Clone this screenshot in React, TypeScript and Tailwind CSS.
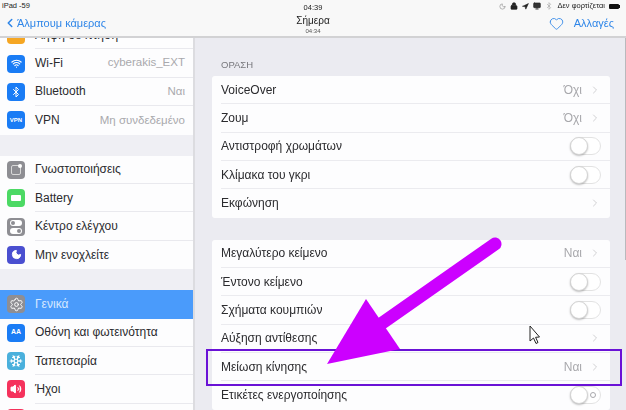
import {ReactNode} from "react";
import {ChevronLeft, ChevronRight, Heart, Bluetooth, Wifi, Moon, Lock, Navigation, Monitor, Snowflake, Settings, Volume2} from "lucide-react";

const font = "[font-family:'Liberation_Sans','Noto_Sans',sans-serif]";

const Toggle = ({ring}: {ring?: boolean}) => (
    <div className="relative flex h-[18px] w-[31px] items-center justify-end rounded-full border border-[#e2e2e2] bg-white pr-[4px]">
        <div className="absolute -left-px -top-px h-[18px] w-[18px] rounded-full border border-[#d4d4d4] bg-white shadow-[0_1px_2px_rgba(0,0,0,0.25)]" />
        {ring && <div className="h-[6px] w-[6px] rounded-full border border-[#a8a8ac]" />}
    </div>
);

const Value = ({text}: {text?: string}) => (
    <div className="flex items-center gap-[7px]">
        {text && <span className="text-[12px] text-[#a8a8ac]">{text}</span>}
        <ChevronRight size={12} strokeWidth={1.6} className="text-[#c4c4c8]" />
    </div>
);

const SideIcon = ({bg, children}: {bg: string; children?: ReactNode}) => (
    <div className={`flex h-[18px] w-[18px] shrink-0 items-center justify-center overflow-hidden rounded-[4px] text-white ${bg}`}>
        {children}
    </div>
);

const SideRow = ({icon, label, value, last, active}: {icon: ReactNode; label: string; value?: string; last?: boolean; active?: boolean}) => (
    <div className={`flex h-[28.4px] items-center pl-[7px] ${active ? "bg-[#4a9bfb]" : "bg-[#fdfdfe]"}`}>
        {icon}
        <div className={`ml-[10px] flex h-full min-w-0 flex-1 items-center justify-between pr-[8px] ${last || active ? "" : "border-b border-[#e9e9ee]"}`}>
            <span className={`text-[12px] ${active ? "text-[#d5e8ff]" : "text-[#2b2b2e]"}`}>{label}</span>
            {value && <span className="text-[11.5px] text-[#a9a9ad]">{value}</span>}
        </div>
    </div>
);

const SetRow = ({label, right, last}: {label: string; right: ReactNode; last?: boolean}) => (
    <div className="flex h-[28.33px] items-center pl-[9px]">
        <div className={`flex h-full flex-1 items-center justify-between pr-[9px] ${last ? "" : "border-b border-[#ebebef]"}`}>
            <span className="text-[12px] text-[#2b2b2e]">{label}</span>
            {right}
        </div>
    </div>
);

const Overlay = () => (
    <>
        <svg className="absolute left-0 top-0 z-20" width="626" height="410" viewBox="0 0 626 410" fill="none">
            <line x1="495" y1="244" x2="378" y2="326" stroke="#cc00ff" strokeWidth="13" strokeLinecap="round" />
            <polygon points="366,299 400,349 327,364" fill="#cc00ff" />
            <path d="M530 326 L530 341 L533.5 338 L536 343.5 L538 342.5 L535.6 337.3 L539.5 337 Z" fill="#fff" stroke="#222" strokeWidth="1" />
        </svg>
        <div className="absolute left-[206px] top-[349px] z-10 h-[37px] w-[416px] border-2 border-[#6a12d6]" />
    </>
);

export default function App() {
    return (
        <div className={`relative h-[410px] w-[626px] overflow-hidden bg-[#ebebf1] ${font}`}>
            <div className="flex h-full flex-col blur-[0.4px]">
                <header className="relative h-[38px] shrink-0 border-b-2 border-[#d2d2d4] bg-[#f8f8f8]">
                    <div className="flex h-[10px] items-center justify-between pl-[2px] pr-[6px] pt-[2px] text-[7.5px] text-[#222]">
                        <span>iPad -59</span>
                        <div className="flex items-center gap-[4px]">
                            <Moon size={7} className="text-[#888]" />
                            <Lock size={8} fill="#222" />
                            <Navigation size={7} fill="#222" />
                            <Monitor size={8} fill="#333" />
                            <Bluetooth size={8} className="text-[#aaa]" />
                            <span>Δεν φορτίζεται</span>
                            <div className="flex items-center">
                                <div className="h-[5px] w-[10px] rounded-[1px] bg-[#111]" />
                                <div className="h-[3px] w-px bg-[#111]" />
                            </div>
                        </div>
                    </div>
                    <div className="flex h-[26px] items-center justify-between pl-[3px] pr-[12px]">
                        <div className="flex items-center text-[#2f86e8]">
                            <ChevronLeft size={14} strokeWidth={2.6} />
                            <span className="text-[11px]">Άλμπουμ κάμερας</span>
                        </div>
                        <div className="flex items-center gap-[10px] text-[#2f86e8]">
                            <Heart size={15} strokeWidth={1.4} />
                            <span className="text-[11px]">Αλλαγές</span>
                        </div>
                    </div>
                    <div className="absolute left-0 right-0 top-[3px] flex flex-col items-center text-[#222]">
                        <span className="text-[7.5px] leading-[9px]">04:39</span>
                        <span className="mt-[3px] text-[10px] leading-[12px]">Σήμερα</span>
                        <span className="text-[6px] leading-[8px] text-[#555]">04:34</span>
                    </div>
                </header>

                <div className="flex min-h-0 flex-1">
                    <aside className="w-[195px] shrink-0 overflow-hidden border-r-2 border-[#dcdce0] bg-[#efeff4]">
                        <div className="-mt-[17px]">
                            <SideRow label="Λήψη σε πτήση" icon={<SideIcon bg="bg-[#f5a623]" />} />
                            <SideRow label="Wi-Fi" value="cyberakis_EXT" icon={<SideIcon bg="bg-[#1a7cf5]"><Wifi size={11} strokeWidth={2.5} /></SideIcon>} />
                            <SideRow label="Bluetooth" value="Ναι" icon={<SideIcon bg="bg-[#1a7cf5]"><Bluetooth size={12} strokeWidth={2} /></SideIcon>} />
                            <SideRow label="VPN" value="Μη συνδεδεμένο" last icon={<SideIcon bg="bg-[#1a7cf5]"><span className="text-[6px] font-bold">VPN</span></SideIcon>} />
                            <div className="h-[21px]" />
                            <SideRow label="Γνωστοποιήσεις" icon={<SideIcon bg="bg-[#8e8e93]"><div className="relative h-[10px] w-[10px] rounded-[2px] border border-[#d8d8d8]"><div className="absolute -right-[2px] -top-[2px] h-[4px] w-[4px] rounded-full bg-white" /></div></SideIcon>} />
                            <SideRow label="Battery" icon={<SideIcon bg="bg-[#4cd964]"><div className="h-[6px] w-[10px] rounded-[1px] bg-white" /></SideIcon>} />
                            <SideRow label="Κέντρο ελέγχου" icon={<SideIcon bg="bg-[#8e8e93]"><div className="flex flex-col gap-[2px]"><div className="flex h-[6px] w-[12px] items-center justify-start rounded-full bg-white pl-[1px]"><div className="h-[4px] w-[4px] rounded-full bg-[#8e8e93]" /></div><div className="flex h-[6px] w-[12px] items-center justify-end rounded-full bg-white pr-[1px]"><div className="h-[4px] w-[4px] rounded-full bg-[#8e8e93]" /></div></div></SideIcon>} />
                            <SideRow label="Μην ενοχλείτε" last icon={<SideIcon bg="bg-[#4a4fd0]"><Moon size={11} fill="#fff" /></SideIcon>} />
                            <div className="h-[21px]" />
                            <SideRow label="Γενικά" active icon={<SideIcon bg="bg-[#8e8e93]"><Settings size={15} strokeWidth={1.6} /></SideIcon>} />
                            <SideRow label="Οθόνη και φωτεινότητα" icon={<SideIcon bg="bg-[#1a7cf5]"><span className="text-[7px] font-bold">AA</span></SideIcon>} />
                            <SideRow label="Ταπετσαρία" icon={<SideIcon bg="bg-[#4ab0dc]"><Snowflake size={14} /></SideIcon>} />
                            <SideRow label="Ήχοι" icon={<SideIcon bg="bg-[#f5325c]"><Volume2 size={12} fill="#fff" /></SideIcon>} />
                            <SideRow label="" icon={<SideIcon bg="bg-[#f5325c]" />} />
                        </div>
                    </aside>

                    <main className="flex-1 pl-[17px] pr-[15px]">
                        <p className="mt-[22px] pl-[9px] text-[9.5px] leading-[10px] text-[#77777c]">ΟΡΑΣΗ</p>
                        <section className="mt-[6px] overflow-hidden rounded-[3px] bg-[#fdfdfe]">
                            <SetRow label="VoiceOver" right={<Value text="Όχι" />} />
                            <SetRow label="Ζουμ" right={<Value text="Όχι" />} />
                            <SetRow label="Αντιστροφή χρωμάτων" right={<Toggle />} />
                            <SetRow label="Κλίμακα του γκρι" right={<Toggle />} />
                            <SetRow label="Εκφώνηση" right={<Value />} last />
                        </section>
                        <section className="mt-[22px] overflow-hidden rounded-[3px] bg-[#fdfdfe]">
                            <SetRow label="Μεγαλύτερο κείμενο" right={<Value text="Ναι" />} />
                            <SetRow label="Έντονο κείμενο" right={<Toggle />} />
                            <SetRow label="Σχήματα κουμπιών" right={<Toggle />} />
                            <SetRow label="Αύξηση αντίθεσης" right={<Value />} />
                            <SetRow label="Μείωση κίνησης" right={<Value text="Ναι" />} />
                            <SetRow label="Ετικέτες ενεργοποίησης" right={<Toggle ring />} last />
                        </section>
                    </main>
                    <div className="h-[222px] w-px shrink-0 bg-[#b9b9bd]" />
                </div>
            </div>
            <Overlay />
        </div>
    );
}
